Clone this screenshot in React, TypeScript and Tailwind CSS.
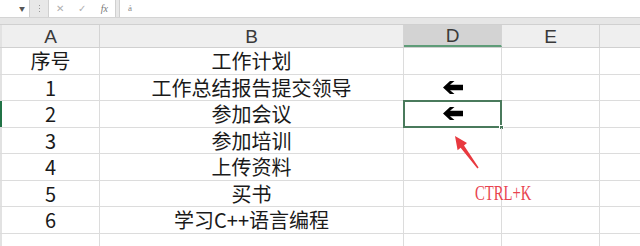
import React from 'react';

const COLS = [
  { key: 'A', width: 'w-[98px]' },
  { key: 'B', width: 'w-[304px]' },
  { key: 'D', width: 'w-[98px]' },
  { key: 'E', width: 'w-[98px]' },
  { key: 'F', width: 'w-[40px]' },
];

const ROWS: { a: string; b: string; arrow?: boolean; selected?: boolean }[] = [
  { a: '序号', b: '工作计划' },
  { a: '1', b: '工作总结报告提交领导', arrow: true },
  { a: '2', b: '参加会议', arrow: true, selected: true },
  { a: '3', b: '参加培训' },
  { a: '4', b: '上传资料' },
  { a: '5', b: '买书' },
  { a: '6', b: '学习C++语言编程' },
  { a: '', b: '' },
];

function BlackArrow() {
  return (
    <svg width="20" height="13" viewBox="0 0 20 13">
      <polygon points="0,6.5 7,0 11.5,0 7,3.7 20,3.7 20,9.3 7,9.3 11.5,13 7,13" fill="#000" />
    </svg>
  );
}

function FormulaBar() {
  return (
    <div className="flex h-[18px] bg-[#e8e8e8] border-b border-[#d4d4d4]">
      <div className="w-[30px] bg-white border-r border-[#d0d0d0] flex items-center justify-end pr-[4px]">
        <span className="text-[6px] text-[#555] leading-none">▼</span>
      </div>
      <div className="w-[18px] flex flex-col items-center justify-center gap-[2px]">
        <span className="w-[1px] h-[1px] bg-[#999]" />
        <span className="w-[1px] h-[1px] bg-[#999]" />
        <span className="w-[1px] h-[1px] bg-[#999]" />
      </div>
      <div className="w-[68px] bg-white border-x border-[#d0d0d0] flex items-center justify-around text-[#b0b0b0] text-[10px] leading-none font-['Liberation_Sans',sans-serif]">
        <span>✕</span>
        <span>✓</span>
        <span className="italic font-['Liberation_Serif',serif] text-[#777]">fx</span>
      </div>
      <div className="w-[3px]" />
      <div className="flex-1 bg-white border-l border-[#d0d0d0] flex items-center pl-[8px]">
        <span className="text-[9px] text-[#888] leading-none font-['Liberation_Serif',serif]">ả</span>
      </div>
    </div>
  );
}

export default function App() {
  return (
    <div className="w-[640px] h-[246px] overflow-hidden bg-white relative font-['Noto_Sans_CJK_SC','Noto_Sans',sans-serif] text-[#1a1a1a]">
      <FormulaBar />
      <div className="h-[6px] bg-[#e6e6e6]" />
      {/* column headers */}
      <div className="flex h-[24px] bg-[#efefef] border-y border-[#d0d0d0]">
        <div className="w-[2px] bg-[#e2e2e2]" />
        {COLS.map((c) => (
          <div
            key={c.key}
            className={`${c.width} flex items-center justify-center border-r border-[#d4d4d4] text-[19px] leading-none font-['Liberation_Sans',sans-serif] text-[#3a3a3a] ${
              c.key === 'D' ? 'bg-[#d3d3d3] border-b-2 border-b-[#5e9c78] text-[#2f5a41]' : ''
            } ${c.key === 'F' ? 'border-r-0' : ''}`}
          >
            {c.key === 'F' ? '' : c.key}
          </div>
        ))}
      </div>
      {/* rows */}
      {ROWS.map((r, i) => (
        <div key={i} className="flex h-[26.5px] border-b border-[#dcdcdc]">
          <div className={`w-[2px] ${r.selected ? 'bg-[#217346]' : 'bg-[#e2e2e2]'}`} />
          <div className="w-[98px] flex items-center justify-center border-r border-[#dcdcdc] text-[20px] leading-none pt-[1px]">
            {r.a}
          </div>
          <div className="w-[304px] flex items-center justify-center border-r border-[#dcdcdc] text-[20px] leading-none pt-[1px]">
            {r.b}
          </div>
          <div className="w-[98px] flex items-center justify-center border-r border-[#dcdcdc] relative">
            {r.arrow && <BlackArrow />}
            {r.selected && (
              <div className="absolute left-[-1px] top-[-1px] w-[99px] h-[27.5px] border-2 border-[#4a7a5c]">
                <span className="absolute right-[-4px] bottom-[-4px] w-[5px] h-[5px] bg-[#4a7a5c] border border-white" />
              </div>
            )}
          </div>
          <div className="w-[98px] border-r border-[#dcdcdc]" />
          <div className="w-[40px]" />
        </div>
      ))}

      {/* annotation: red arrow pointing at the selected cell */}
      <svg className="absolute left-0 top-0 pointer-events-none" width="640" height="246">
        <polygon
          points="455,136 467,143 464,145.5 478.6,167.5 477.4,168.5 460.6,147.8 457.6,150.2"
          fill="#e8393f"
        />
      </svg>
      <div className="absolute left-[475px] top-[183px] origin-left scale-x-[0.7] text-[21px] leading-none text-[#e8434f] font-['Liberation_Serif',serif] whitespace-nowrap">
        CTRL+K
      </div>
    </div>
  );
}
